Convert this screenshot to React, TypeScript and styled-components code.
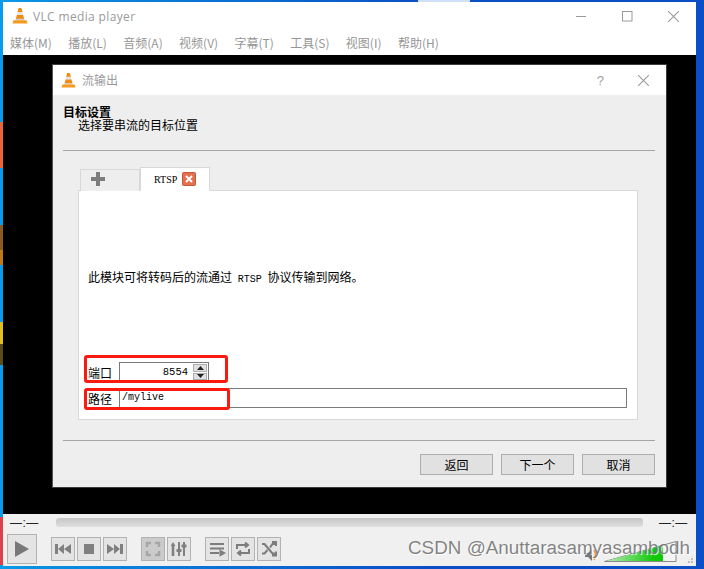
import * as React from "react";
import styled, {createGlobalStyle} from "styled-components";

const Global = createGlobalStyle`
  html, body {
    margin: 0;
    padding: 0;
    width: 704px;
    height: 569px;
    overflow: hidden;
    background: #0b4fc6;
  }
  body {
    font-family: "Noto Sans CJK SC", "Liberation Sans", sans-serif;
  }
`;

const Desktop = styled.div`
  position: relative;
  width: 704px;
  height: 569px;
  box-sizing: border-box;
  padding: 2px 8px 3px 3px;
  background: linear-gradient(90deg, #0a9cec 0, #0a90e2 5%, #0b4fc6 60%);
  display: flex;
`;

// bits of desktop icons that show past the window edge
const DesktopScrap = styled.div<{$left?: number; $top: number; $width?: number; $height: number; $color: string}>`
  position: absolute;
  left: ${p => p.$left ?? 0}px;
  top: ${p => p.$top}px;
  width: ${p => p.$width ?? 3}px;
  height: ${p => p.$height}px;
  background: ${p => p.$color};
`;

const Window = styled.div`
  flex: 1;
  display: flex;
  flex-direction: column;
  min-width: 0;
`;

const TitleBar = styled.div`
  height: 27px;
  box-sizing: border-box;
  padding: 1px 0 0 9px;
  flex: none;
  background: #fff;
  display: flex;
  align-items: center;
  gap: 5px;
  color: #9a9a9a;
  font-size: 12px;
  letter-spacing: 0.35px;
  font-family: "Open Sans", sans-serif;
`;

const Caption = styled.span`
  flex: 1;
`;

const DialogCaption = styled(Caption)`
  margin-top: -2px;
`;

const CaptionButtons = styled.div<{$gap: number; $right: number}>`
  display: flex;
  align-items: center;
  gap: ${p => p.$gap}px;
  padding-right: ${p => p.$right}px;
  color: #9a9a9a;
`;

const MenuBar = styled.div`
  height: 26px;
  flex: none;
  background: #fff;
  display: flex;
  align-items: center;
  padding-left: 7px;
  gap: 16.4px;
  color: #969696;
  font-size: 12px;
`;

const Video = styled.div`
  flex: 1;
  background: #000;
  padding: 9px 29px 26px 49px;
  display: flex;
  min-height: 0;
`;

const Dialog = styled.div`
  flex: 1;
  display: flex;
  flex-direction: column;
  border: 1px solid #3c3c3c;
  border-left-color: #555;
  background: #eee;
`;

const DialogTitle = styled.div`
  height: 30px;
  flex: none;
  background: #fff;
  display: flex;
  align-items: center;
  padding-left: 8px;
  gap: 6px;
  color: #9a9a9a;
  font-size: 12px;
`;

const HelpMark = styled.span`
  font-family: "Liberation Sans", sans-serif;
  font-size: 13px;
  color: #a0a0a0;
`;

const DialogBody = styled.div`
  flex: 1;
  display: flex;
  flex-direction: column;
  padding: 10px 11px 11px 10px;
  color: #000;
`;

const Heading = styled.div`
  font-size: 12px;
  line-height: 13px;
  font-weight: 700;
`;

const SubHeading = styled.div`
  font-size: 12px;
  line-height: 13px;
  padding-left: 15px;
`;

const Rule = styled.div<{$top: number}>`
  height: 1px;
  flex: none;
  margin-top: ${p => p.$top}px;
  background: #a5a5a5;
`;

const TabArea = styled.div`
  margin: 16px 17px 0 15px;
  height: 252px;
  flex: none;
  display: flex;
  flex-direction: column;
`;

const TabRow = styled.div`
  display: flex;
  align-items: flex-end;
  padding-left: 2px;
  height: 24px;
  flex: none;
  margin-bottom: -1px;
  position: relative;
  z-index: 1;
`;

const AddTab = styled.div`
  width: 60px;
  height: 22px;
  box-sizing: border-box;
  border: 1px solid #d8d8d8;
  border-bottom: none;
  background: #eee;
  display: flex;
  align-items: center;
  padding: 0 0 3px 10px;
`;

const ActiveTab = styled.div`
  width: 70px;
  height: 24px;
  box-sizing: border-box;
  border: 1px solid #d8d8d8;
  border-bottom: 1px solid #fff;
  background: #fff;
  display: flex;
  align-items: center;
  padding-left: 13px;
  gap: 5px;
  font-family: "Liberation Serif", serif;
  font-size: 10px;
`;

const Pane = styled.div`
  flex: 1;
  background: #fff;
  border: 1px solid #d8d8d8;
  display: flex;
  flex-direction: column;
  padding: 0 10px 11px 9px;
`;

const PaneText = styled.div`
  margin-top: 78px;
  font-size: 12px;
  line-height: 16px;
`;

const LatinWord = styled.span`
  font-family: "Liberation Mono", monospace;
  font-size: 10px;
  margin: 0 3px;
`;

const Field = styled.div<{$top: number}>`
  display: flex;
  align-items: center;
  gap: 6px;
  height: 20px;
  margin-top: ${p => p.$top}px;
`;

const FieldLabel = styled.label`
  font-size: 12px;
  width: 25px;
  flex: none;
`;

const SpinBox = styled.div`
  width: 90px;
  height: 20px;
  box-sizing: border-box;
  border: 1px solid #7a7a7a;
  display: flex;
  align-items: center;
  justify-content: flex-end;
  font-family: "Liberation Mono", monospace;
  font-size: 10.5px;
  gap: 5px;
  padding-right: 1px;
`;

const SpinArrows = styled.div`
  width: 14px;
  height: 16px;
  display: flex;
  flex-direction: column;
  gap: 1px;
`;

const SpinArrow = styled.div`
  flex: 1;
  background: #e1e1e1;
  border: 1px solid #adadad;
  display: flex;
  align-items: center;
  justify-content: center;
`;

const PathInput = styled.div`
  flex: 1;
  height: 20px;
  box-sizing: border-box;
  border: 1px solid #7a7a7a;
  padding-left: 2px;
  font-family: "Liberation Mono", monospace;
  font-size: 10px;
  line-height: 17px;
`;

const ButtonRow = styled.div`
  display: flex;
  justify-content: flex-end;
  gap: 8px;
  margin-top: 13px;
`;

const PushButton = styled.div`
  width: 73px;
  height: 21px;
  box-sizing: border-box;
  border: 1px solid #adadad;
  background: #e1e1e1;
  display: flex;
  align-items: center;
  justify-content: center;
  font-size: 12px;
`;

const Controls = styled.div`
  height: 52px;
  flex: none;
  background: #f0f0f0;
  display: flex;
  flex-direction: column;
`;

const SeekRow = styled.div`
  height: 17px;
  flex: none;
  display: flex;
  align-items: center;
  padding: 0 7px;
`;

const Time = styled.span`
  width: 46px;
  flex: none;
  font-family: "Liberation Sans", sans-serif;
  font-size: 12px;
  letter-spacing: 0.5px;
  color: #222;
`;

const EndTime = styled(Time)`
  width: 30px;
  margin-left: 16px;
`;

const SeekTrack = styled.div`
  flex: 1;
  height: 9px;
  border-radius: 3px;
  background: linear-gradient(180deg, #c6c6c6, #dedede);
`;

const ButtonRowBar = styled.div`
  flex: 1;
  display: flex;
  align-items: center;
  padding-left: 4px;
`;

const PlayButton = styled.div`
  width: 30px;
  height: 30px;
  box-sizing: border-box;
  border: 1px solid #b2b2b2;
  background: #e4e4e4;
  display: flex;
  align-items: center;
  justify-content: center;
  margin-right: 14px;
`;

const ToolButton = styled.div<{$off?: boolean; $after?: number}>`
  width: 24px;
  height: 24px;
  box-sizing: border-box;
  border: 1px solid #b2b2b2;
  background: ${p => (p.$off ? "#cbcbcb" : "#e4e4e4")};
  display: flex;
  align-items: center;
  justify-content: center;
  margin-right: ${p => p.$after ?? 2}px;
`;

const Volume = styled.div`
  position: absolute;
  left: 575px;
  top: 539px;
  width: 104px;
  height: 26px;
`;

const ResizeGrip = styled.div`
  position: absolute;
  left: 685px;
  top: 555px;
  width: 9px;
  height: 9px;
  background: radial-gradient(circle at 1px 1px, #bdbdbd 1px, transparent 1.2px) 0 0 / 3px 3px;
  clip-path: polygon(100% 0, 100% 100%, 0 100%);
`;

const Annotation = styled.div<{$left: number; $top: number; $width: number; $height: number}>`
  position: absolute;
  left: ${p => p.$left}px;
  top: ${p => p.$top}px;
  width: ${p => p.$width}px;
  height: ${p => p.$height}px;
  box-sizing: border-box;
  border: 3px solid #fb1a10;
  border-radius: 3px;
`;

const Watermark = styled.div`
  position: absolute;
  left: 408px;
  top: 536px;
  font-family: "Liberation Sans", sans-serif;
  font-size: 18.85px;
  line-height: 24px;
  white-space: nowrap;
  color: rgba(110, 110, 110, 0.85);
  text-shadow: 1px 1px 1px rgba(255, 255, 255, 0.9);
`;

const Cone = ({size}: {size: number}) => (
    <svg width={size} height={size} viewBox="0 0 16 16">
        <path d="M6.6 0h2.800l1.200 4.200H5.400z" fill="#f08a12"/>
        <path d="M5.600 4h4.800l.9 3.200H4.700z" fill="#e4e4e4"/>
        <path d="M4.900 7h6.200l1.200 4.200H3.700z" fill="#f08a12"/>
        <path d="M4 10.800h8l.8 1.700H3.200z" fill="#cfcfcf"/>
        <path d="M1.500 12.200h13l1 3.300H.5z" fill="#f59a1c"/>
    </svg>
);

const Cross = ({size, color}: {size: number; color: string}) => (
    <svg width={size} height={size} viewBox="0 0 10 10">
        <path d="M0 0l10 10M10 0L0 10" stroke={color} strokeWidth="1" fill="none"/>
    </svg>
);

const Solid = ({d, color = "#808080"}: {d: string; color?: string}) => (
    <svg width={16} height={16} viewBox="0 0 16 16">
        <path d={d} fill={color}/>
    </svg>
);

const Line = ({d, color = "#7c7c7c", width = 2}: {d: string; color?: string; width?: number}) => (
    <svg width={18} height={18} viewBox="0 0 18 18">
        <path d={d} fill="none" stroke={color} strokeWidth={width}/>
    </svg>
);

const menus = ["媒体(M)", "播放(L)", "音频(A)", "视频(V)", "字幕(T)", "工具(S)", "视图(I)", "帮助(H)"];

export default function App() {
    return <Desktop>
        <Global/>
        <DesktopScrap $top={122} $height={46} $color="#e8653a"/>
        <DesktopScrap $top={225} $height={25} $color="#8a5a20"/>
        <DesktopScrap $top={250} $height={15} $color="#c07818"/>
        <DesktopScrap $top={322} $height={22} $color="#e0c020"/>
        <DesktopScrap $top={344} $height={21} $color="#5a4c18"/>
        <DesktopScrap $top={517} $height={48} $color="#e0404a"/>
        <DesktopScrap $left={418} $top={0} $width={52} $height={2} $color="#cfe0f8"/>
        <Window>
            <TitleBar>
                <Cone size={16}/>
                <Caption>VLC media player</Caption>
                <CaptionButtons $gap={35} $right={17}>
                    <svg width={11} height={11} viewBox="0 0 11 11"><path d="M0 5.500h10" stroke="#9a9a9a"/></svg>
                    <svg width={11} height={11} viewBox="0 0 11 11"><rect x="0.5" y="0.5" width="9.500" height="9.500" fill="none" stroke="#9a9a9a"/></svg>
                    <Cross size={11} color="#9a9a9a"/>
                </CaptionButtons>
            </TitleBar>
            <MenuBar>
                {menus.map(m => <span key={m}>{m}</span>)}
            </MenuBar>
            <Video>
                <Dialog>
                    <DialogTitle>
                        <Cone size={15}/>
                        <DialogCaption>流输出</DialogCaption>
                        <CaptionButtons $gap={34} $right={17}>
                            <HelpMark>?</HelpMark>
                            <Cross size={11} color="#9a9a9a"/>
                        </CaptionButtons>
                    </DialogTitle>
                    <DialogBody>
                        <Heading>目标设置</Heading>
                        <SubHeading>选择要串流的目标位置</SubHeading>
                        <Rule $top={19}/>
                        <TabArea>
                            <TabRow>
                                <AddTab>
                                    <svg width={14} height={14} viewBox="0 0 14 14">
                                        <path d="M5 0h4v5h5v4H9v5H5V9H0V5h5z" fill="#7d7d7d"/>
                                    </svg>
                                </AddTab>
                                <ActiveTab>
                                    RTSP
                                    <svg width={14} height={14} viewBox="0 0 14 14">
                                        <rect x="0.5" y="0.5" width="13" height="13" rx="1" fill="#e2714f" stroke="#c9573a"/>
                                        <path d="M4 4l6 6M10 4l-6 6" stroke="#fff" strokeWidth="2"/>
                                    </svg>
                                </ActiveTab>
                            </TabRow>
                            <Pane>
                                <PaneText>此模块可将转码后的流通过 <LatinWord>RTSP</LatinWord> 协议传输到网络。</PaneText>
                                <Field $top={74}>
                                    <FieldLabel>端口</FieldLabel>
                                    <SpinBox>
                                        8554
                                        <SpinArrows>
                                            <SpinArrow>
                                                <svg width={7} height={4} viewBox="0 0 7 4"><path d="M3.500 0L7 4H0z" fill="#222"/></svg>
                                            </SpinArrow>
                                            <SpinArrow>
                                                <svg width={7} height={4} viewBox="0 0 7 4"><path d="M0 0h7L3.500 4z" fill="#222"/></svg>
                                            </SpinArrow>
                                        </SpinArrows>
                                    </SpinBox>
                                </Field>
                                <Field $top={6}>
                                    <FieldLabel>路径</FieldLabel>
                                    <PathInput>/mylive</PathInput>
                                </Field>
                            </Pane>
                        </TabArea>
                        <Rule $top={21}/>
                        <ButtonRow>
                            <PushButton>返回</PushButton>
                            <PushButton>下一个</PushButton>
                            <PushButton>取消</PushButton>
                        </ButtonRow>
                    </DialogBody>
                </Dialog>
            </Video>
            <Controls>
                <SeekRow>
                    <Time>—:—</Time>
                    <SeekTrack/>
                    <EndTime>—:—</EndTime>
                </SeekRow>
                <ButtonRowBar>
                    <PlayButton>
                        <svg width={16} height={18} viewBox="0 0 16 18"><path d="M1 1l14 8-14 8z" fill="#787878"/></svg>
                    </PlayButton>
                    <ToolButton><Solid d="M0 3h3v10H0zM3 8l6-5v10zM9 8l7-5v10z"/></ToolButton>
                    <ToolButton><Solid d="M3 3h10v10H3z"/></ToolButton>
                    <ToolButton $after={14}><Solid d="M16 3h-3v10h3zM13 8L7 3v10zM7 8L0 3v10z"/></ToolButton>
                    <ToolButton $off>
                        <Line color="#a6a6a6" width={2.5} d="M3 7V3h4M11 3h4v4M15 11v4h-4M7 15H3v-4"/>
                    </ToolButton>
                    <ToolButton $after={14}>
                        <Solid d="M2 1l2.500 4H3.300v10H.7V5H-.500zM7 1h2v7h1.500v3H9v4H7v-4H5.500V8H7zM12 1h2v2.500h1.500v3H14V15h-2V6.500h-1.500v-3H12z"/>
                    </ToolButton>
                    <ToolButton><Line d="M2 4h14M2 8.500h14M2 13h9M12.500 11l3.500 2-3.500 2z"/></ToolButton>
                    <ToolButton><Line d="M3 9V5h10M11 2.500L14 5l-3 2.500M15 9v4H5M7 10.500L4 13l3 2.500"/></ToolButton>
                    <ToolButton><Line d="M2 4h2.500l8 9.500H15M2 13.500h2.500L7.500 10M10 7.500L12.500 4H15M12 2h4v4M12 15.500h4v-4"/></ToolButton>
                </ButtonRowBar>
            </Controls>
        </Window>
        <Volume>
            <svg width={104} height={26} viewBox="0 0 104 26">
                <defs>
                    <linearGradient id="level" x1="0" x2="1">
                        <stop offset="0" stopColor="#b5ecb5"/>
                        <stop offset="0.85" stopColor="#10c808"/>
                    </linearGradient>
                </defs>
                <path d="M10 14h3l4-4v12l-4-4h-3z" fill="#777"/>
                <path d="M19 11q3 5 0 10" fill="none" stroke="#e8962a" strokeWidth="1.500"/>
                <path d="M29.500 22.500L101 2.500V22.500z" fill="#f4f4f4" stroke="#8a8a8a"/>
                <path d="M31 22L88 6.500V22z" fill="url(#level)"/>
            </svg>
        </Volume>
        <ResizeGrip/>
        <Annotation $left={84} $top={355} $width={144} $height={28}/>
        <Annotation $left={84} $top={388} $width={146} $height={22}/>
        <Watermark>CSDN @Anuttarasamyasambodh</Watermark>
    </Desktop>;
}
